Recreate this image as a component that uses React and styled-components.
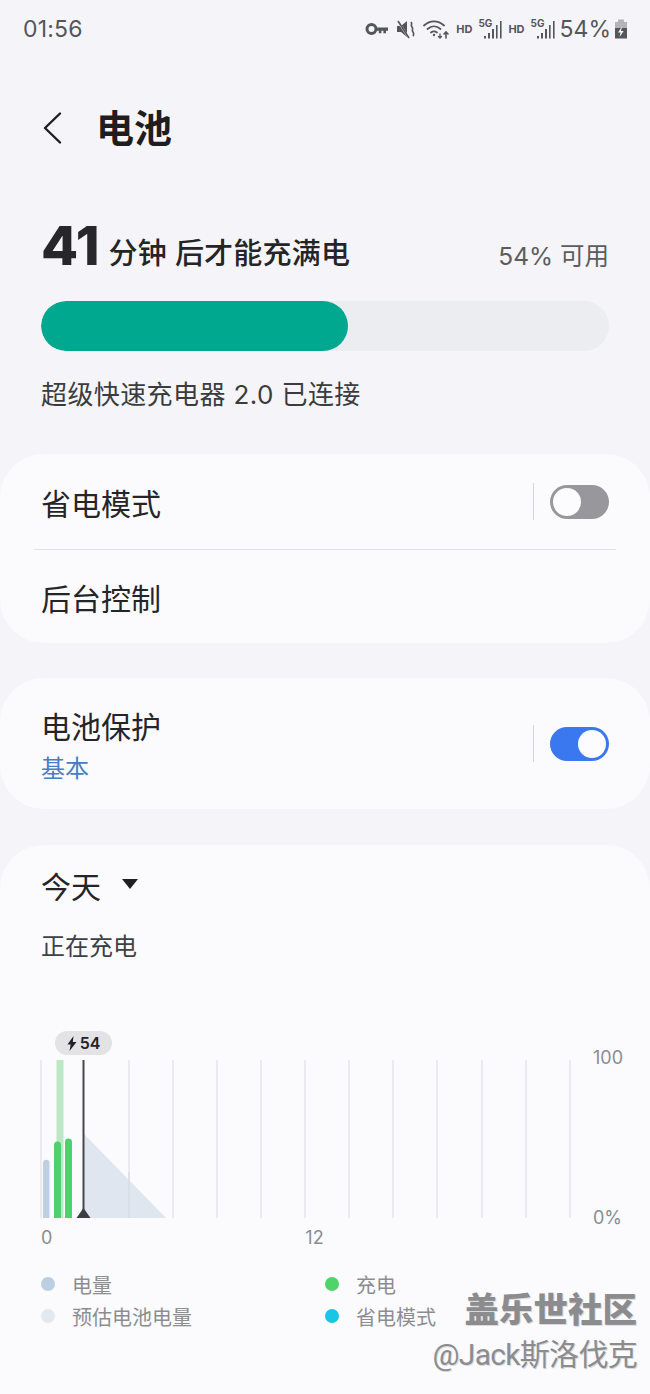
import React from "react";
import styled, { createGlobalStyle } from "styled-components";

const Global = createGlobalStyle`
  html, body { margin: 0; padding: 0; background: #f5f5f9; }
  body { font-family: "Inter", "Noto Sans CJK SC", sans-serif; }
  * { box-sizing: border-box; }
`;
const CJK = `"Inter", "Noto Sans CJK SC", sans-serif`;

const Page = styled.div`
  position: relative;
  width: 650px;
  height: 1394px;
  overflow: hidden;
  background: #f5f5f9;
  font-family: ${CJK};
  color: #252528;
`;
const StatusBar = styled.div`
  height: 58px;
  padding: 0 22px 0 23px;
  display: flex;
  align-items: center;
  justify-content: space-between;
  color: #55565a;
`;
const Clock = styled.span`
  font-size: 23px;
  letter-spacing: 0.2px;
`;
const StatusIcons = styled.div`
  display: flex;
  align-items: center;
  gap: 6px;
`;
const IconSlot = styled.span`
  display: inline-flex;
  margin: 0 ${(p) => p.$m || 0}px;
`;
const Tiny = styled.span`
  font-size: 11px;
  font-weight: 700;
  line-height: 1;
  color: #55565a;
`;
const SignalWrap = styled.span`
  position: relative;
  display: inline-block;
  width: 24px;
  height: 20px;
`;
const FiveG = styled.span`
  position: absolute;
  left: 0;
  top: -1px;
  font-size: 10px;
  font-weight: 700;
  line-height: 1;
  color: #55565a;
`;
const Percent = styled.span`
  font-size: 23px;
  line-height: 1;
  margin: 0 -3px 0 -1px;
`;
const Header = styled.header`
  height: 140px;
  padding: 0 0 0 42px;
  display: flex;
  align-items: center;
  gap: 34px;
`;
const Title = styled.h1`
  margin: 0;
  font-size: 38px;
  font-weight: 700;
  line-height: 1;
  color: #1e1e21;
`;
const Summary = styled.section`
  padding: 18px 41px 0;
`;
const SummaryRow = styled.div`
  height: 60px;
  display: flex;
  align-items: center;
  justify-content: space-between;
`;
const Remaining = styled.div`
  display: flex;
  align-items: center;
  gap: 9px;
`;
const BigNumber = styled.span`
  font-size: 54px;
  font-weight: 800;
  line-height: 1;
  color: #27272b;
`;
const RemainingText = styled.span`
  font-size: 29px;
  font-weight: 500;
  line-height: 1;
  margin-top: 15px;
  letter-spacing: 0.2px;
`;
const Available = styled.span`
  font-size: 24.5px;
  line-height: 1;
  color: #5b5c60;
  margin-top: 20px;
`;
const Track = styled.div`
  margin-top: 25px;
  height: 50px;
  border-radius: 25px;
  background: #ecedf0;
  overflow: hidden;
`;
const Fill = styled.div`
  height: 100%;
  border-radius: 25px;
  background: #00a88f;
`;
const Caption = styled.p`
  margin: 26px 0 41px;
  height: 36px;
  font-size: 26px;
  line-height: 36px;
  letter-spacing: 0.4px;
  color: #3b3c40;
`;
const Card = styled.section`
  background: #fbfbfe;
  border-radius: 44px;
  margin-bottom: ${(p) => p.$gap || 0}px;
`;
const Row = styled.div`
  height: ${(p) => p.$h}px;
  padding: ${(p) => p.$top || 0}px 41px 0;
  display: flex;
  align-items: center;
  justify-content: space-between;
`;
const RowLabel = styled.div`
  font-size: 30px;
  line-height: 40px;
  color: #252528;
`;
const RowSub = styled.div`
  font-size: 24px;
  line-height: 30px;
  margin-top: 7px;
  color: #4a7cc4;
`;
const RowText = styled.div`
  margin-top: 4px;
`;
const Divider = styled.div`
  height: 1px;
  margin: 0 34px;
  background: #e2e2e6;
`;
const ToggleGroup = styled.div`
  display: flex;
  align-items: center;
  gap: 16px;
  margin-top: ${(p) => p.$shift || 0}px;
`;
const VRule = styled.span`
  width: 1px;
  height: 37px;
  background: #d6d6da;
`;
const Toggle = styled.span`
  width: 59px;
  height: 34px;
  border-radius: 17px;
  padding: 3px;
  display: flex;
  justify-content: ${(p) => (p.$on ? "flex-end" : "flex-start")};
  background: ${(p) => (p.$on ? "#3a78ef" : "#98989c")};
`;
const Knob = styled.span`
  width: 28px;
  height: 28px;
  border-radius: 50%;
  background: #fcfcfe;
`;
const HistoryCard = styled(Card)`
  height: 560px;
  border-radius: 44px 44px 0 0;
  padding: 22px 0 0 41px;
`;
const PeriodRow = styled.div`
  display: flex;
  align-items: center;
  gap: 21px;
  height: 40px;
`;
const Period = styled.span`
  font-size: 30px;
  line-height: 40px;
`;
const Caret = styled.span`
  width: 0;
  height: 0;
  border-left: 8px solid transparent;
  border-right: 8px solid transparent;
  border-top: 10px solid #202024;
  margin-top: -6px;
`;
const State = styled.div`
  margin-top: 22px;
  font-size: 24px;
  line-height: 36px;
  color: #3f4044;
`;
const Chart = styled.div`
  position: relative;
  margin-top: 66px;
  width: 590px;
  display: grid;
  grid-template-columns: 552px 38px;
  padding-top: 18px;
`;
const Plot = styled.svg`
  display: block;
  width: 552px;
  height: 169px;
  margin-left: -1px;
`;
const Badge = styled.div`
  position: absolute;
  left: 14px;
  top: 0;
  width: 57px;
  height: 24px;
  border-radius: 12px;
  background: #e3e3e6;
  display: flex;
  align-items: center;
  justify-content: center;
  gap: 3px;
  font-size: 16px;
  font-weight: 600;
  color: #232326;
`;
const YAxis = styled.div`
  height: 169px;
  display: flex;
  flex-direction: column;
  justify-content: space-between;
  font-size: 18px;
  line-height: 24px;
  color: #8b8c90;
`;
const YTop = styled.span`
  margin-top: -3px;
`;
const YBottom = styled.span`
  margin-bottom: -12px;
`;
const XAxis = styled.div`
  margin-top: 8px;
  display: flex;
  gap: 253px;
  font-size: 18px;
  line-height: 24px;
  color: #8b8c90;
`;
const Legend = styled.div`
  margin-top: 19px;
  display: grid;
  grid-template-columns: 284px 1fr;
  row-gap: 2px;
`;
const LegendItem = styled.div`
  display: flex;
  align-items: center;
  height: 30px;
  gap: 17px;
  font-size: 20px;
  color: #8c8d91;
`;
const Dot = styled.span`
  width: 14px;
  height: 14px;
  border-radius: 50%;
  background: ${(p) => p.$c};
`;
const Watermark = styled.div`
  position: absolute;
  right: 13px;
  top: 1288px;
  text-align: right;
  color: #8c8c8e;
  text-shadow: 1px 1px 0 #d9d9db;
`;
const WmTop = styled.div`
  font-size: 34.5px;
  font-weight: 900;
  line-height: 44px;
`;
const WmBottom = styled.div`
  font-family: "Roboto", "Noto Sans CJK SC", sans-serif;
  font-size: 30px;
  line-height: 46px;
  letter-spacing: -0.7px;
`;

const gridX = [41, 129, 173, 217, 261, 305, 349, 393, 437, 482, 526, 570];

const Key = () => (
  <svg width="24" height="14" viewBox="0 0 24 14" fill="none">
    <circle cx="6.5" cy="7" r="4.5" stroke="#55565a" strokeWidth="3" />
    <path d="M11 5.5h12v3.2h-2v2.5h-2.6V8.7h-2v2.5h-2.6V8.7H11z" fill="#55565a" />
  </svg>
);
const Mute = () => (
  <svg width="20" height="20" viewBox="0 0 20 20" fill="none">
    <path d="M1 7h4l6-5v16l-6-5H1z" fill="#55565a" />
    <path d="M1 1l12 18" stroke="#f5f5f9" strokeWidth="2" />
    <path d="M2 2l11 17" stroke="#55565a" strokeWidth="1.6" />
    <path d="M15 3c2 2-1 3 1 5s-1 3 1 5-1 3 1 4" stroke="#55565a" strokeWidth="1.7" />
  </svg>
);
const Wifi = () => (
  <svg width="27" height="20" viewBox="0 0 27 20" fill="none" stroke="#55565a" strokeWidth="1.8" strokeLinecap="round">
    <path d="M1 6.5C7 1 15 1 21 6.5" />
    <path d="M4.5 10C8.5 6.5 13.5 6.5 17.5 10" />
    <path d="M8 13.5c2-1.5 4-1.5 6 0" />
    <path d="M11 16h.01" strokeWidth="2.4" />
    <path d="M17 15v4M15.5 17.5L17 19l1.5-1.5" strokeWidth="1.3" />
    <path d="M23 19v-6M21 15l2-2 2 2" strokeWidth="1.6" />
  </svg>
);
const Signal = () => (
  <SignalWrap>
    <FiveG>5G</FiveG>
    <svg width="24" height="20" viewBox="0 0 24 20" fill="#55565a">
      <rect x="6" y="17" width="2" height="2.5" />
      <rect x="10" y="14" width="2" height="5.5" />
      <rect x="14" y="10" width="2" height="9.5" />
      <rect x="18" y="6" width="1.6" height="13.5" />
      <rect x="22" y="2" width="1.6" height="17.5" />
    </svg>
  </SignalWrap>
);
const Battery = () => (
  <svg width="14" height="20" viewBox="0 0 14 20" fill="none">
    <rect x="4" y="0.5" width="6" height="3" fill="#b4b4b8" />
    <rect x="1" y="3" width="12" height="7" fill="#b4b4b8" />
    <rect x="1" y="9" width="12" height="10.5" fill="#55565a" />
    <path d="M8 7.5l-4 6h2.6L5.5 18l4.2-6H7z" fill="#f5f5f9" />
  </svg>
);
const Back = () => (
  <svg width="20" height="32" viewBox="0 0 20 32" fill="none" stroke="#1e1e21" strokeWidth="2.4" strokeLinecap="round" strokeLinejoin="round">
    <path d="M18 1.5L3 16l15 14.5" />
  </svg>
);
const Bolt = () => (
  <svg width="10" height="15" viewBox="0 0 10 15" fill="#202024">
    <path d="M6.5 0L0.5 8.5h3.2L2.5 15l7-9H5.8z" />
  </svg>
);

const ChartDrawing = () => (
  <Plot viewBox="40 1049 552 169" aria-hidden="true">
    {gridX.map((x) => (
      <line key={x} x1={x} x2={x} y1="1060" y2="1218" stroke="#e6e6ea" strokeWidth="1.5" />
    ))}
    <path d="M84 1134L166 1218H84z" fill="#dfe6ef" />
    <line x1="129" x2="129" y1="1172" y2="1218" stroke="#d6dbe3" strokeWidth="1.2" />
    <rect x="56.5" y="1060" width="7" height="158" fill="#bde8c5" />
    <path d="M43 1218v-55a3 3 0 0 1 6.5 0v55z" fill="#bfcfe0" />
    <path d="M54 1218v-73a3.4 3.4 0 0 1 7 0v73z" fill="#50cf6c" />
    <path d="M65 1218v-76a3.4 3.4 0 0 1 7 0v76z" fill="#50cf6c" />
    <line x1="83.5" x2="83.5" y1="1060" y2="1212" stroke="#46474a" strokeWidth="2" />
    <path d="M83.5 1208L90.5 1218H76.5z" fill="#3d3e41" />
  </Plot>
);

export default function App() {
  return (
    <Page>
      <Global />
      <StatusBar>
        <Clock>01:56</Clock>
        <StatusIcons>
          <Key />
          <IconSlot $m={1}>
            <Mute />
          </IconSlot>
          <Wifi />
          <Tiny>HD</Tiny>
          <Signal />
          <Tiny>HD</Tiny>
          <Signal />
          <Percent>54%</Percent>
          <Battery />
        </StatusIcons>
      </StatusBar>
      <Header>
        <Back />
        <Title>电池</Title>
      </Header>
      <Summary>
        <SummaryRow>
          <Remaining>
            <BigNumber>41</BigNumber>
            <RemainingText>分钟 后才能充满电</RemainingText>
          </Remaining>
          <Available>54% 可用</Available>
        </SummaryRow>
        <Track>
          <Fill style={{ width: "54%" }} />
        </Track>
        <Caption>超级快速充电器 2.0 已连接</Caption>
      </Summary>
      <Card $gap={35}>
        <Row $h={95} $top={4}>
          <RowLabel>省电模式</RowLabel>
          <ToggleGroup $shift={-4}>
            <VRule />
            <Toggle>
              <Knob />
            </Toggle>
          </ToggleGroup>
        </Row>
        <Divider />
        <Row $h={93} $top={4}>
          <RowLabel>后台控制</RowLabel>
        </Row>
      </Card>
      <Card $gap={36}>
        <Row $h={131}>
          <RowText>
            <RowLabel>电池保护</RowLabel>
            <RowSub>基本</RowSub>
          </RowText>
          <ToggleGroup>
            <VRule />
            <Toggle $on>
              <Knob />
            </Toggle>
          </ToggleGroup>
        </Row>
      </Card>
      <HistoryCard>
        <PeriodRow>
          <Period>今天</Period>
          <Caret />
        </PeriodRow>
        <State>正在充电</State>
        <Chart>
          <Badge>
            <Bolt />
            54
          </Badge>
          <ChartDrawing />
          <YAxis>
            <YTop>100</YTop>
            <YBottom>0%</YBottom>
          </YAxis>
        </Chart>
        <XAxis>
          <span>0</span>
          <span>12</span>
        </XAxis>
        <Legend>
          <LegendItem>
            <Dot $c="#bccfe2" />
            电量
          </LegendItem>
          <LegendItem>
            <Dot $c="#4fd36b" />
            充电
          </LegendItem>
          <LegendItem>
            <Dot $c="#e1e8f0" />
            预估电池电量
          </LegendItem>
          <LegendItem>
            <Dot $c="#1ac6e6" />
            省电模式
          </LegendItem>
        </Legend>
      </HistoryCard>
      <Watermark>
        <WmTop>盖乐世社区</WmTop>
        <WmBottom>@Jack斯洛伐克</WmBottom>
      </Watermark>
    </Page>
  );
}
